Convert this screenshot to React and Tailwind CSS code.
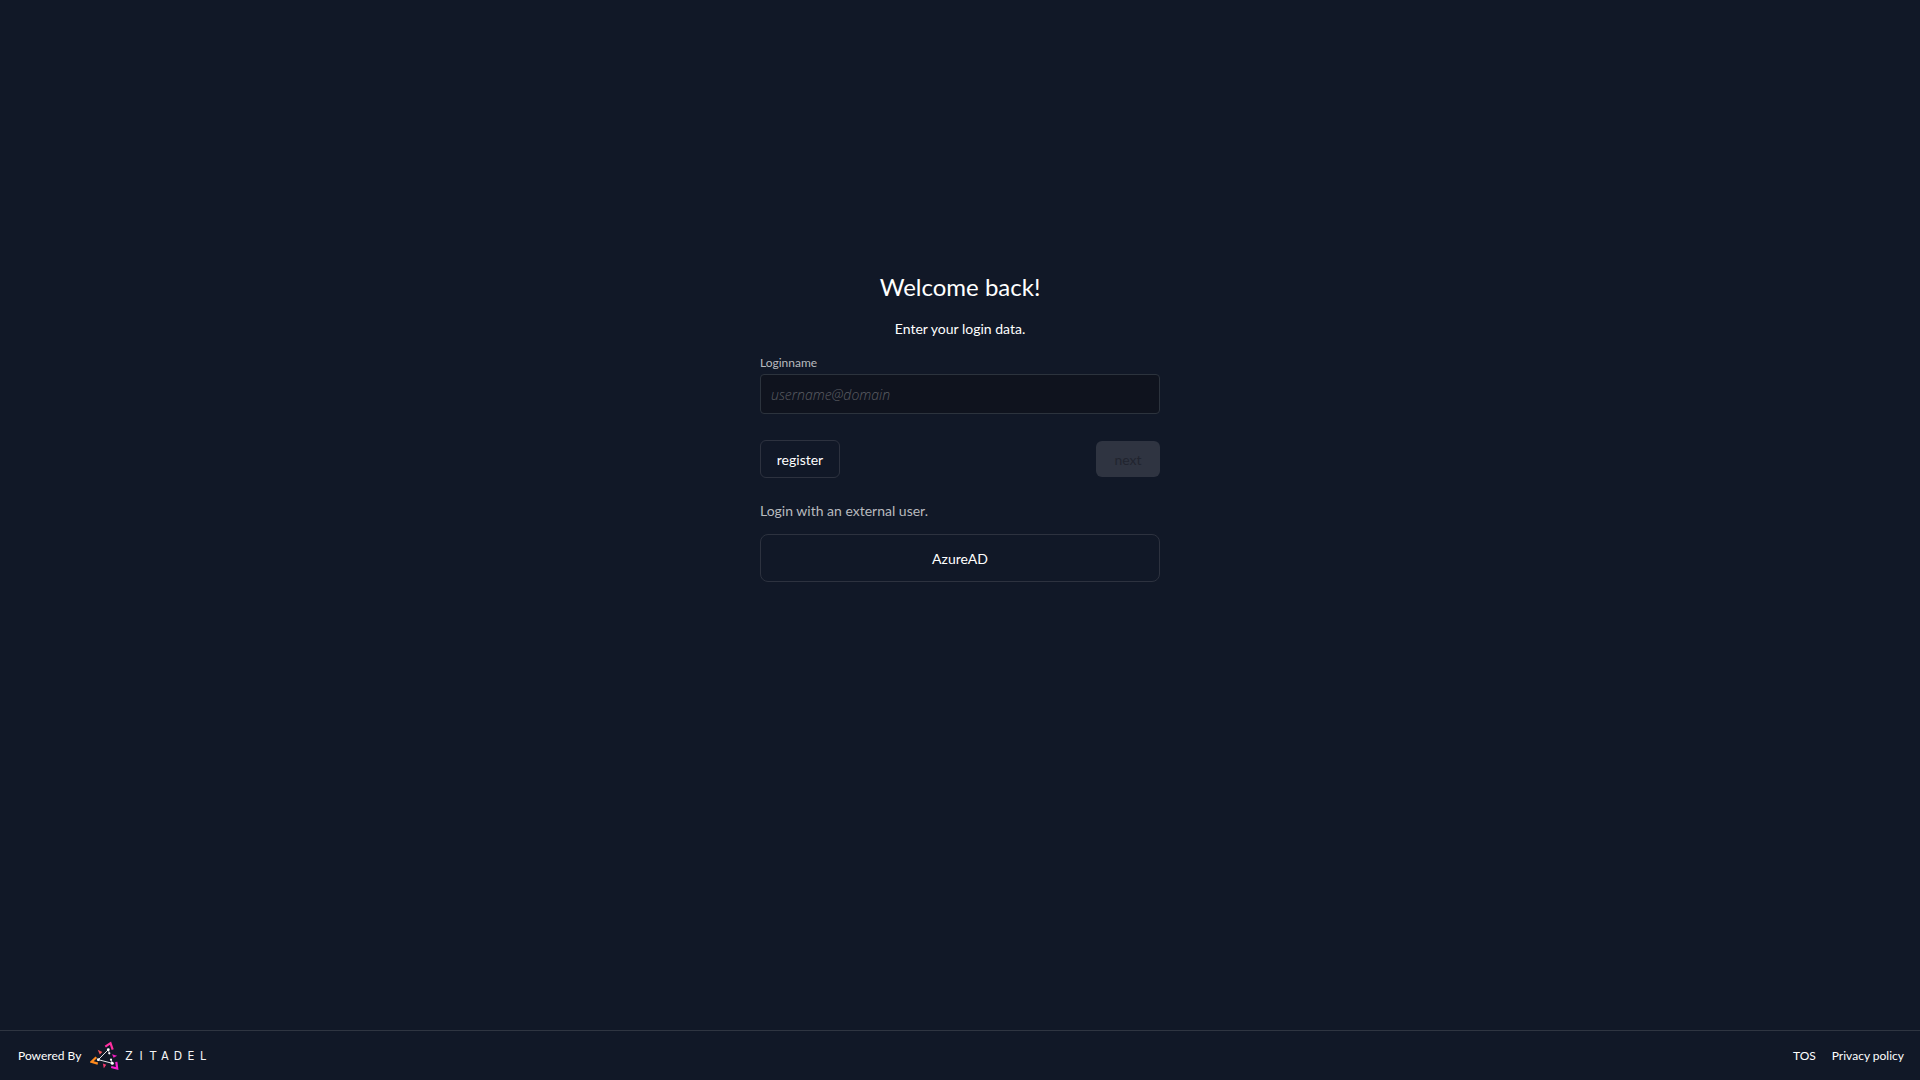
import { useState } from "react";

function ZitadelLogo() {
  return (
    <svg width="120" height="31" viewBox="0 0 120 31" role="img" aria-label="Zitadel">
      {/* corner arrows */}
      <g fill="none" strokeWidth="2.2">
        <path d="M15.3 6.7 L20.5 3.2 L22.7 9.7" stroke="#ff2fa0" />
        <path d="M6.3 17.2 L1.6 21.8 L7.8 23.6" stroke="#ff8a1c" />
        <path d="M21.2 27 L27.2 28.5 L26.3 21.8" stroke="#f71fd0" />
      </g>
      {/* side chevrons */}
      <path d="M7.7 9.8 L12.3 12 L9.8 14.4 Z" fill="#f4525c" />
      <path d="M22 14.2 L27.2 15.7 L23.6 17.8 Z" fill="#ee1fc0" />
      <path d="M12.9 23.4 L16.3 24.8 L13.8 28.3 Z" fill="#f83c70" />
      {/* inner triangle */}
      <path d="M18.3 9.7 L8.3 19.7 L22.3 23.3" fill="none" stroke="#ffffff" strokeWidth="0.9" />
      <path d="M18.3 9.7 L19.3 13.3 M21 19.7 L22.3 23.3" fill="none" stroke="#ffffff" strokeWidth="0.7" />
      <g fill="#ffffff">
        <circle cx="18.3" cy="9.7" r="1.4" />
        <circle cx="8.3" cy="19.7" r="1.4" />
        <circle cx="22.3" cy="23.3" r="1.5" />
        <circle cx="19.3" cy="13.3" r="1.1" />
        <circle cx="21" cy="19.7" r="1.1" />
      </g>
      <text
        x="39 51 63 75 88 101 113"
        y="20"
        fill="#f4f4f5"
        textAnchor="middle"
        fontSize="12"
        fontFamily="'Liberation Sans Narrow', 'DejaVu Sans Condensed', sans-serif"
      >
        ZITADEL
      </text>
    </svg>
  );
}

export default function App() {
  const [loginName, setLoginName] = useState("");

  return (
    <div className="flex min-h-screen flex-col bg-[#111827] font-['Lato',sans-serif] text-sm text-white">
      <main className="mx-auto w-full max-w-[400px] flex-1 pt-[271px]">
        <h1 className="text-center text-2xl leading-8">Welcome back!</h1>
        <p className="mt-4 text-center leading-5">Enter your login data.</p>

        <form onSubmit={(event) => event.preventDefault()}>
          <label htmlFor="loginName" className="mt-4 block text-xs leading-4 text-[#b8babe]">
            Loginname
          </label>
          <input
            id="loginName"
            type="text"
            value={loginName}
            onChange={(event) => setLoginName(event.target.value)}
            placeholder="username@domain"
            className="mt-[3px] block h-10 w-full rounded border border-[#2c333d] bg-[#0f131e] px-[10px] outline-none placeholder:font-['Open_Sans',sans-serif] placeholder:font-light placeholder:italic placeholder:text-[#5c5e64]"
          />

          <div className="mt-[26px] flex items-center justify-between">
            <button type="button" className="h-[38px] w-20 rounded-md border border-[#2d323f] pt-0.5">
              register
            </button>
            <button
              type="submit"
              disabled={!loginName}
              className="h-9 w-16 rounded-md bg-[#5469d4] pt-0.5 disabled:bg-[#2f3441] disabled:text-[#21242f]"
            >
              next
            </button>
          </div>
        </form>

        <p className="mt-[23px] leading-5 text-[#b8babe]">Login with an external user.</p>
        <button type="button" className="mt-[13px] h-12 w-full rounded-lg border border-[#2d323f] pt-0.5">
          AzureAD
        </button>
      </main>

      <footer className="flex h-[50px] items-center justify-between border-t border-[#2f3541] pr-4 pl-[18px] text-xs">
        <div className="flex items-center gap-[9px]">
          <span>Powered By</span>
          <ZitadelLogo />
        </div>
        <nav className="flex gap-4">
          <a href="#tos">TOS</a>
          <a href="#privacy">Privacy policy</a>
        </nav>
      </footer>
    </div>
  );
}
